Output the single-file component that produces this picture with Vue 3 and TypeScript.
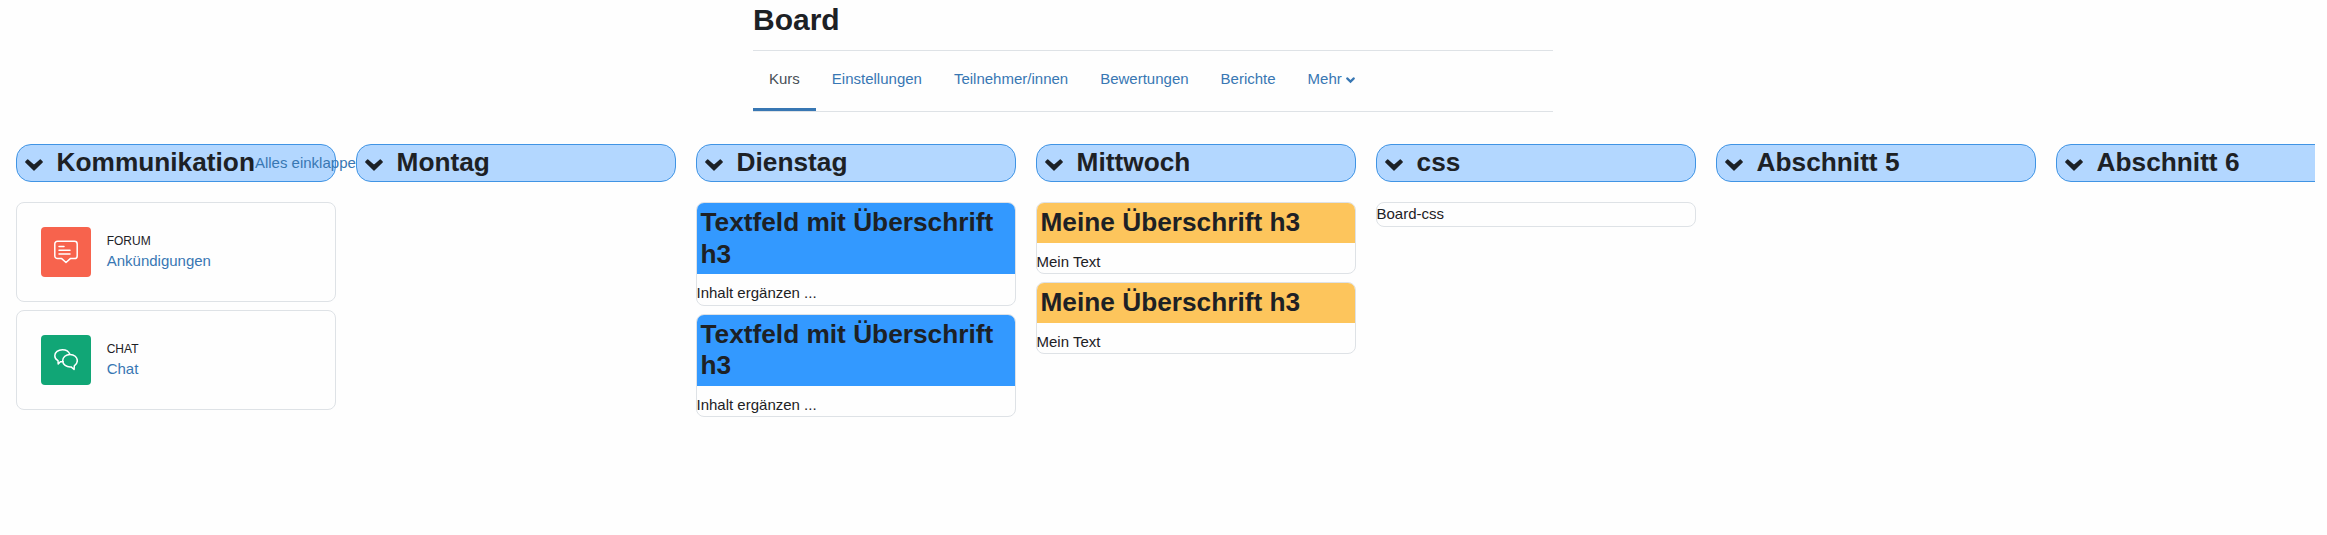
<script setup lang="ts">
interface Activity {
  kind: 'forum' | 'chat'
  type: string
  name: string
}
interface Note {
  heading?: string
  tone?: 'blue' | 'yellow'
  text: string
}
interface Section {
  title: string
  collapseAll?: string
  activities?: Activity[]
  notes?: Note[]
}

const tabs: string[] = ['Kurs', 'Einstellungen', 'Teilnehmer/innen', 'Bewertungen', 'Berichte']

const sections: Section[] = [
  {
    title: 'Kommunikation',
    collapseAll: 'Alles einklappen',
    activities: [
      { kind: 'forum', type: 'FORUM', name: 'Ankündigungen' },
      { kind: 'chat', type: 'CHAT', name: 'Chat' },
    ],
  },
  { title: 'Montag' },
  {
    title: 'Dienstag',
    notes: [
      { heading: 'Textfeld mit Überschrift h3', tone: 'blue', text: 'Inhalt ergänzen ...' },
      { heading: 'Textfeld mit Überschrift h3', tone: 'blue', text: 'Inhalt ergänzen ...' },
    ],
  },
  {
    title: 'Mittwoch',
    notes: [
      { heading: 'Meine Überschrift h3', tone: 'yellow', text: 'Mein Text' },
      { heading: 'Meine Überschrift h3', tone: 'yellow', text: 'Mein Text' },
    ],
  },
  { title: 'css', notes: [{ text: 'Board-css' }] },
  { title: 'Abschnitt 5' },
  { title: 'Abschnitt 6' },
]
</script>

<template>
  <div class="page">
    <header class="top">
      <h1>Board</h1>
      <nav class="tabs">
        <a v-for="(tab, i) in tabs" :key="tab" class="tab" :class="{ active: i === 0 }">{{ tab }}</a>
        <a class="tab">
          Mehr
          <svg class="more" viewBox="0 0 9 6"><path d="M1.2 1.400 4.500 4.600 7.800 1.400" /></svg>
        </a>
      </nav>
    </header>

    <main class="board">
      <section v-for="section in sections" :key="section.title" class="column">
        <div class="column-head">
          <svg class="chevron" viewBox="0 0 18 12"><path d="M.8 3 2.700 1 9 6.500 15.300 1 17.200 3 9 10.900z" /></svg>
          <h3>{{ section.title }}</h3>
          <a v-if="section.collapseAll" class="collapse">{{ section.collapseAll }}</a>
        </div>
        <div class="cards">
          <article v-for="item in section.activities" :key="item.name" class="card activity">
            <div class="icon" :class="item.kind">
              <svg v-if="item.kind === 'forum'" viewBox="0 0 24 24">
                <path d="M3.500 1.200h17a2.700 2.700 0 0 1 2.700 2.700v12a2.700 2.700 0 0 1-2.700 2.700h-4.200L12 22.500l-4.300-3.900H3.500A2.700 2.700 0 0 1 .8 15.900V3.900a2.700 2.700 0 0 1 2.700-2.700z" />
                <path d="M5 6.500h5M5 10.200h11M5 14h11" />
              </svg>
              <svg v-else viewBox="0 0 24 24">
                <path d="M9.200 13.700C8.300 13.900 7.300 13.900 6.400 13.700L4.200 16 4 12.600C2 11.500.8 9.700.8 7.700.8 4.200 4.200 1.700 8.400 1.700c3.500 0 6.500 1.900 7.400 4.600" />
                <path d="M16 6.400c4.200 0 7.300 2.700 7.300 6.300 0 2.100-1.100 4-3 5.200l-.2 3.600-3-2.600c-4.600.4-8.400-2.400-8.400-6.200 0-3.500 3.200-6.300 7.300-6.300z" />
              </svg>
            </div>
            <div class="info">
              <span class="type">{{ item.type }}</span>
              <a class="name">{{ item.name }}</a>
            </div>
          </article>
          <article v-for="(note, n) in section.notes" :key="n" class="card">
            <h3 v-if="note.heading" class="note-title" :class="note.tone">{{ note.heading }}</h3>
            <p>{{ note.text }}</p>
          </article>
        </div>
      </section>
    </main>
  </div>
</template>

<style>
body {
  background: #fefefe;
}
</style>

<style scoped>
.page {
  box-sizing: border-box;
  width: 2315px;
  height: 535px;
  overflow: hidden;
  padding-top: 2px;
  font: 15px/22.5px "Liberation Sans", Arial, sans-serif;
  color: #1d2125;
}
h1,
h3,
p {
  margin: 0;
}
h1 {
  font-size: 30px;
  line-height: 36px;
}
h3 {
  font-size: 26.25px;
  line-height: 31.5px;
}
a {
  color: #3877b3;
}
.top {
  width: 800px;
  margin-left: 753px;
}
.tabs {
  display: flex;
  box-sizing: border-box;
  height: 62px;
  margin-top: 12px;
  border-top: 1px solid #dee2e6;
  border-bottom: 1px solid #dee2e6;
}
.tab {
  display: flex;
  align-items: center;
  box-sizing: border-box;
  height: 60px;
  padding: 0 16px 1px;
  border-bottom: 3px solid transparent;
}
.tab.active {
  color: #495057;
  border-bottom-color: #3877b3;
}
.more {
  width: 9px;
  height: 6px;
  margin: 1px 0 0 4.5px;
  overflow: visible;
}
.more path {
  fill: none;
  stroke: currentColor;
  stroke-width: 2.2;
  stroke-linecap: round;
}
.board {
  display: flex;
  gap: 20px;
  margin: 32px 0 0 15.5px;
}
.column {
  flex: 0 0 320px;
  min-width: 0;
}
.column-head {
  position: relative;
  display: flex;
  align-items: center;
  box-sizing: border-box;
  height: 38px;
  padding-left: 8.9px;
  border: 1px solid #4094e4;
  border-radius: 15px;
  background: #b3d7ff;
  white-space: nowrap;
}
.chevron {
  flex: none;
  width: 18px;
  height: 12px;
  margin: 3px 13.2px 0 0;
  overflow: visible;
}
.chevron path {
  fill: currentColor;
  stroke: currentColor;
  stroke-width: 1.4;
  stroke-linejoin: round;
}
.cards {
  display: flex;
  flex-direction: column;
  gap: 8px;
  margin-top: 20px;
}
.card {
  overflow: hidden;
  border: 1px solid #dee2e6;
  border-radius: 8px;
}
.activity {
  display: flex;
  align-items: center;
  box-sizing: border-box;
  height: 100px;
  padding-left: 24px;
}
.icon {
  display: grid;
  place-items: center;
  width: 50px;
  height: 50px;
  margin-right: 16.2px;
  border-radius: 4px;
}
.icon svg {
  width: 24px;
  height: 24px;
  fill: none;
  stroke: #fff;
  stroke-width: 1.5;
  stroke-linejoin: round;
  stroke-linecap: round;
}
.forum {
  background: #f7634d;
}
.chat {
  background: #11a676;
}
.info {
  display: flex;
  flex-direction: column;
}
.type {
  font-size: 12px;
  line-height: 18px;
}
.note-title {
  margin-bottom: 8px;
  padding: 4px;
}
.blue {
  background: #3399ff;
}
.yellow {
  background: #fdc55c;
}
</style>
